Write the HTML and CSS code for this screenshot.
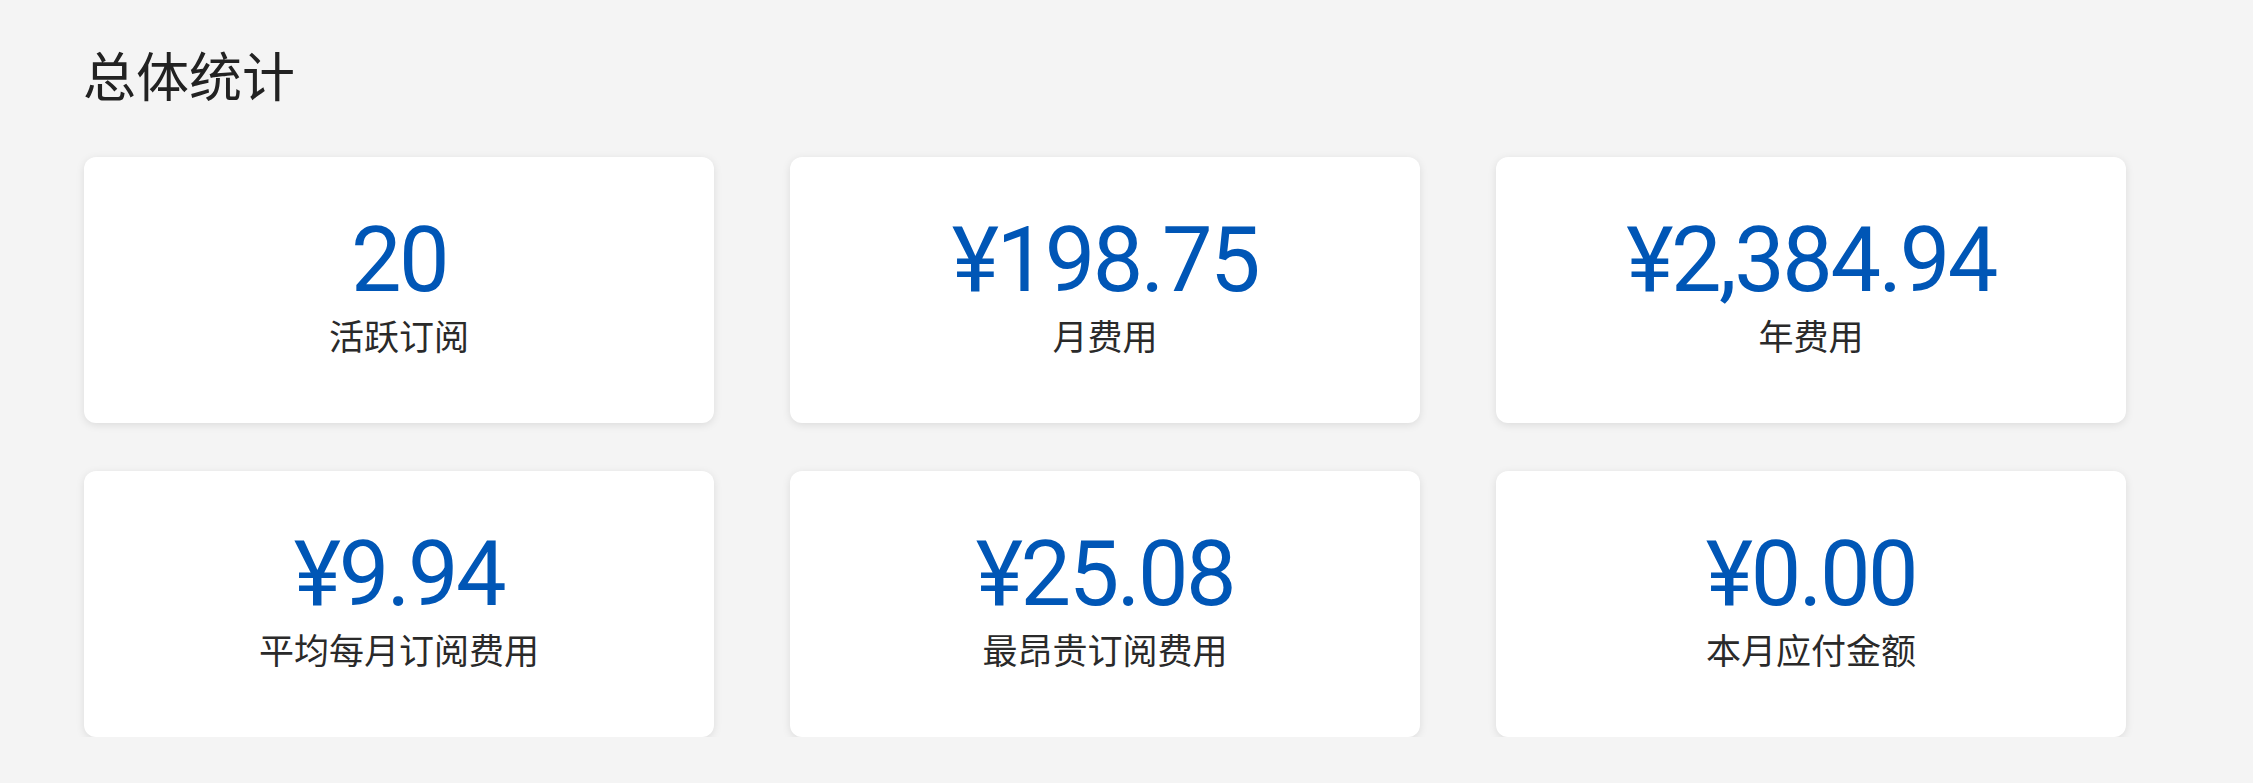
FILE: index.html
```html
<!DOCTYPE html>
<html lang="zh-CN">
<head>
<meta charset="utf-8">
<title>总体统计</title>
<link rel="stylesheet" href="styles.css">
</head>
<body>
<main class="page">
  <h1 class="title">总体统计</h1>
  <section class="stats">
    <div class="card"><div class="value">20</div><div class="label">活跃订阅</div></div>
    <div class="card"><div class="value">¥198.75</div><div class="label">月费用</div></div>
    <div class="card"><div class="value">¥2,384.94</div><div class="label">年费用</div></div>
    <div class="card"><div class="value">¥9.94</div><div class="label">平均每月订阅费用</div></div>
    <div class="card"><div class="value">¥25.08</div><div class="label">最昂贵订阅费用</div></div>
    <div class="card"><div class="value">¥0.00</div><div class="label">本月应付金额</div></div>
  </section>
</main>
</body>
</html>
```

FILE: styles.css
```css
html, body {
  margin: 0;
  padding: 0;
  background: #f4f4f4;
}

.page {
  padding: 42px 0 0 83px;
  font-family: "Noto Sans CJK SC", "Noto Sans", sans-serif;
}

.title {
  margin: 0 0 51px 0;
  font-size: 53px;
  line-height: 64px;
  font-weight: 400;
  color: #222222;
}

.stats {
  display: grid;
  grid-template-columns: repeat(3, 630px);
  column-gap: 76px;
  row-gap: 48px;
  padding-left: 1px;
}

.card {
  height: 266px;
  box-sizing: border-box;
  padding-bottom: 16px;
  background: #ffffff;
  border-radius: 12px;
  box-shadow: 0 2px 8px rgba(0, 0, 0, 0.10);
  display: flex;
  flex-direction: column;
  align-items: center;
  justify-content: center;
}

.value {
  font-family: Roboto, "Noto Sans", sans-serif;
  font-size: 90px;
  line-height: 106px;
  letter-spacing: -2.5px;
  color: #0056b6;
}

.label {
  font-size: 35px;
  line-height: 42px;
  color: #2a2a2a;
}
```
